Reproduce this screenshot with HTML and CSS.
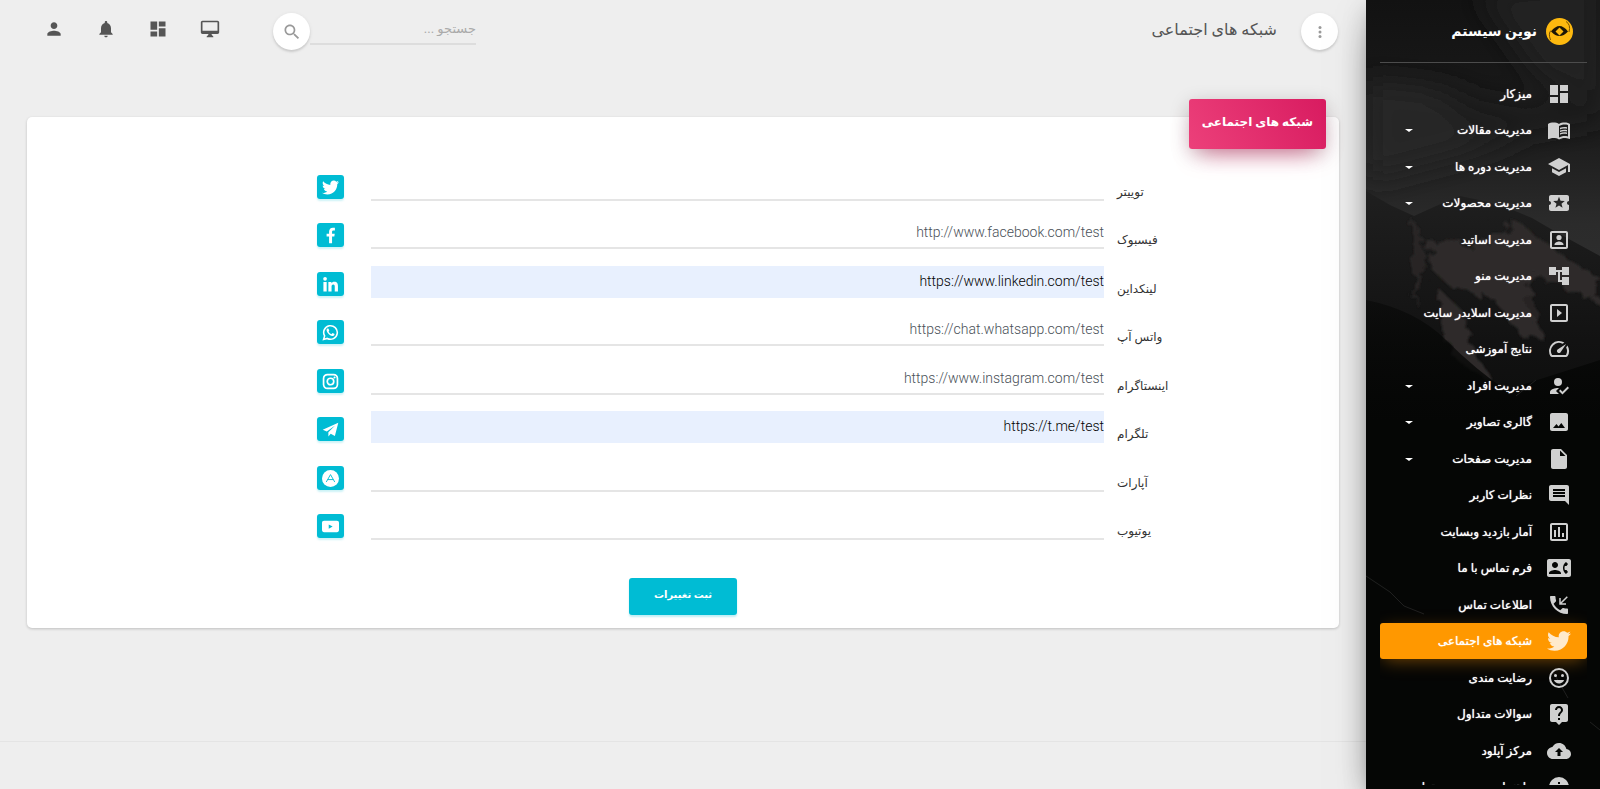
FILE: index.html
```html
<!DOCTYPE html>
<html lang="fa" dir="rtl">
<head>
<meta charset="utf-8">
<meta name="viewport" content="width=device-width, initial-scale=1">
<title>شبکه های اجتماعی</title>
<link rel="stylesheet" href="styles.css">
</head>
<body>
<svg class="sprite" aria-hidden="true">
  <symbol id="dashboard" viewBox="0 0 24 24"><path d="M3 13h8V3H3v10zm0 8h8v-6H3v6zm10 0h8V11h-8v10zm0-18v6h8V3h-8z"/></symbol>
  <symbol id="book" viewBox="0 0 24 24"><path d="M21 5c-1.11-.35-2.33-.5-3.5-.5-1.95 0-4.05.4-5.5 1.5-1.45-1.1-3.55-1.5-5.5-1.5S2.45 4.9 1 6v14.65c0 .25.25.5.5.5.1 0 .15-.05.25-.05C3.1 20.45 5.05 20 6.5 20c1.95 0 4.05.4 5.5 1.5 1.35-.85 3.8-1.5 5.5-1.5 1.65 0 3.35.3 4.75 1.05.1.05.15.05.25.05.25 0 .5-.25.5-.5V6c-.6-.45-1.25-.75-2-1zm0 13.5c-1.1-.35-2.3-.5-3.5-.5-1.7 0-4.15.65-5.5 1.5V8c1.35-.85 3.8-1.5 5.5-1.5 1.2 0 2.4.15 3.5.5v11.5z"/><path d="M17.5 10.5c.88 0 1.73.09 2.5.26V9.24c-.79-.15-1.64-.24-2.5-.24-1.7 0-3.24.29-4.5.83v1.66c1.13-.64 2.7-.99 4.5-.99zM13 12.49v1.66c1.13-.64 2.7-.99 4.5-.99.88 0 1.73.09 2.5.26V11.9c-.79-.15-1.64-.24-2.5-.24-1.7 0-3.24.3-4.5.83zM17.5 14.33c-1.7 0-3.24.29-4.5.83v1.66c1.13-.64 2.7-.99 4.5-.99.88 0 1.73.09 2.5.26v-1.52c-.79-.16-1.64-.24-2.5-.24z"/></symbol>
  <symbol id="school" viewBox="0 0 24 24"><path d="M5 13.18v4L12 21l7-3.82v-4L12 17l-7-3.82zM12 3L1 9l11 6 9-4.91V17h2V9L12 3z"/></symbol>
  <symbol id="ticket" viewBox="0 0 24 24"><path d="M20 12c0-1.1.9-2 2-2V6c0-1.1-.9-2-2-2H4c-1.1 0-1.99.9-1.99 2v4c1.1 0 1.99.9 1.99 2s-.89 2-2 2v4c0 1.1.9 2 2 2h16c1.1 0 2-.9 2-2v-4c-1.1 0-2-.9-2-2zm-4.42 4.8L12 14.5l-3.58 2.3 1.08-4.12-3.29-2.69 4.24-.25L12 5.8l1.54 3.95 4.24.25-3.29 2.69 1.09 4.11z"/></symbol>
  <symbol id="portrait" viewBox="0 0 24 24"><path fill-rule="evenodd" d="M19 3H5c-1.11 0-2 .9-2 2v14c0 1.1.89 2 2 2h14c1.1 0 2-.9 2-2V5c0-1.1-.9-2-2-2zm0 16H5V5h14v14z"/><circle cx="12" cy="9.5" r="2.6"/><path d="M7.5 16.5c0-1.9 3-2.9 4.5-2.9s4.5 1 4.5 2.9v.5h-9z"/></symbol>
  <symbol id="tree" viewBox="0 0 24 24"><path d="M22 11V3h-7v3H9V3H2v8h7V8h2v10h4v3h7v-8h-7v3h-2V8h2v3z"/></symbol>
  <symbol id="slideshow" viewBox="0 0 24 24"><path d="M10 8v8l5-4-5-4zm9-5H5c-1.1 0-2 .9-2 2v14c0 1.1.9 2 2 2h14c1.1 0 2-.9 2-2V5c0-1.1-.9-2-2-2zm0 16H5V5h14v14z"/></symbol>
  <symbol id="speed" viewBox="0 0 24 24"><path d="M20.38 8.57l-1.23 1.85a8 8 0 0 1-.22 7.58H5.07A8 8 0 0 1 15.58 6.85l1.85-1.23A10 10 0 0 0 3.35 19a2 2 0 0 0 1.72 1h13.85a2 2 0 0 0 1.74-1 10 10 0 0 0-.27-10.44zm-9.79 6.84a2 2 0 0 0 2.83 0l5.66-8.49-8.49 5.66a2 2 0 0 0 0 2.83z"/></symbol>
  <symbol id="reg" viewBox="0 0 24 24"><circle cx="11" cy="8" r="4"/><path d="M9 17l3-2.94c-.39-.04-.68-.06-1-.06-2.67 0-8 1.34-8 4v2h9l-3-3zM15.47 20.5L12 17l1.4-1.41 2.07 2.08 5.13-5.17 1.4 1.41z"/></symbol>
  <symbol id="image" viewBox="0 0 24 24"><path d="M21 19V5c0-1.1-.9-2-2-2H5c-1.1 0-2 .9-2 2v14c0 1.1.9 2 2 2h14c1.1 0 2-.9 2-2zM9.5 14l2 2.4L14.3 13l3.7 5H6z"/></symbol>
  <symbol id="file" viewBox="0 0 24 24"><path d="M6 2c-1.1 0-1.99.9-1.99 2L4 20c0 1.1.89 2 1.99 2H18c1.1 0 2-.9 2-2V8l-6-6H6zm7 7V3.5L18.5 9H13z"/></symbol>
  <symbol id="comment" viewBox="0 0 24 24"><path d="M21.99 4c0-1.1-.89-2-1.99-2H4c-1.1 0-2 .9-2 2v12c0 1.1.9 2 2 2h14l4 4-.01-18zM18 14H6v-2h12v2zm0-3H6V9h12v2zm0-3H6V6h12v2z"/></symbol>
  <symbol id="chart" viewBox="0 0 24 24"><path d="M9 17H7v-7h2v7zm4 0h-2V7h2v10zm4 0h-2v-4h2v4zm2 2H5V5h14v14zm0-16H5c-1.1 0-2 .9-2 2v14c0 1.1.9 2 2 2h14c1.1 0 2-.9 2-2V5c0-1.1-.9-2-2-2z"/></symbol>
  <symbol id="contact" viewBox="0 0 24 24"><path d="M22 3H2C.9 3 0 3.9 0 5v14c0 1.1.9 2 2 2h20c1.1 0 1.99-.9 1.99-2L24 5c0-1.1-.9-2-2-2zM8 6c1.66 0 3 1.34 3 3s-1.34 3-3 3-3-1.34-3-3 1.34-3 3-3zm6 12H2v-1c0-2 4-3.1 6-3.1s6 1.1 6 3.1v1zm3.85-4h1.64L21 16l-1.99 1.99c-1.31-.98-2.28-2.38-2.73-3.99-.18-.64-.28-1.31-.28-2s.1-1.36.28-2c.45-1.62 1.42-3.01 2.73-3.99L21 8l-1.51 2h-1.64c-.22.63-.35 1.3-.35 2s.13 1.37.35 2z"/></symbol>
  <symbol id="phone" viewBox="0 0 24 24"><path d="M20 15.5c-1.25 0-2.45-.2-3.57-.57-.35-.11-.74-.03-1.02.24l-2.2 2.2c-2.83-1.44-5.15-3.75-6.59-6.58l2.2-2.21c.28-.27.36-.66.25-1.01C8.7 6.45 8.5 5.25 8.5 4c0-.55-.45-1-1-1H4c-.55 0-1 .45-1 1 0 9.39 7.61 17 17 17 .55 0 1-.45 1-1v-3.5c0-.55-.45-1-1-1z"/><path d="M20.3 3.7L13.500 10.500M13 5v6h6" fill="none" stroke="currentColor" stroke-width="1.5"/></symbol>
  <symbol id="twitter" viewBox="0 0 512 512"><path d="M459.37 151.716c.325 4.548.325 9.097.325 13.645 0 138.72-105.583 298.558-298.558 298.558-59.452 0-114.68-17.219-161.137-47.106 8.447.974 16.568 1.299 25.34 1.299 49.055 0 94.213-16.568 130.274-44.832-46.132-.975-84.792-31.188-98.112-72.772 6.498.974 12.995 1.624 19.818 1.624 9.421 0 18.843-1.3 27.614-3.573-48.081-9.747-84.143-51.98-84.143-102.985v-1.299c13.969 7.797 30.214 12.67 47.431 13.319-28.264-18.843-46.781-51.005-46.781-87.391 0-19.492 5.197-37.36 14.294-52.954 51.655 63.675 129.3 105.258 216.365 109.807-1.624-7.797-2.599-15.918-2.599-24.04 0-57.828 46.782-104.934 104.934-104.934 30.213 0 57.502 12.67 76.67 33.137 23.715-4.548 46.456-13.32 66.599-25.34-7.798 24.366-24.366 44.833-46.132 57.827 21.117-2.273 41.584-8.122 60.426-16.243-14.292 20.791-32.161 39.308-52.628 54.253z"/></symbol>
  <symbol id="smile" viewBox="0 0 24 24"><circle cx="12" cy="12" r="9" fill="none" stroke="currentColor" stroke-width="2"/><circle cx="8.5" cy="9.5" r="1.5"/><circle cx="15.5" cy="9.5" r="1.5"/><path d="M12 17.5c2.33 0 4.31-1.46 5.11-3.5H6.89c.8 2.04 2.78 3.5 5.11 3.5z"/></symbol>
  <symbol id="help" viewBox="0 0 24 24"><path d="M19 2H5c-1.11 0-2 .9-2 2v14c0 1.1.89 2 2 2h4l3 3 3-3h4c1.1 0 2-.9 2-2V4c0-1.1-.9-2-2-2zm-6 16h-2v-2h2v2zm2.07-7.75l-.9.92C13.45 11.9 13 12.5 13 14h-2v-.5c0-1.1.45-2.1 1.17-2.83l1.24-1.26c.37-.36.59-.86.59-1.41 0-1.1-.9-2-2-2s-2 .9-2 2H8c0-2.21 1.79-4 4-4s4 1.79 4 4c0 .88-.36 1.68-.93 2.25z"/></symbol>
  <symbol id="cloud" viewBox="0 0 24 24"><path d="M19.35 10.04C18.67 6.59 15.64 4 12 4 9.11 4 6.6 5.64 5.35 8.04 2.34 8.36 0 10.91 0 14c0 3.31 2.69 6 6 6h13c2.76 0 5-2.24 5-5 0-2.64-2.05-4.78-4.65-4.96zM13.5 13v4h-3v-4H8l4-4 4 4z"/></symbol>
  <symbol id="info" viewBox="0 0 24 24"><path d="M12 2a10 10 0 1 0 0 20 10 10 0 0 0 0-20zm1 15h-2v-6h2zm0-8h-2V7h2z"/></symbol>
  <symbol id="person" viewBox="0 0 24 24"><path d="M12 12c2.21 0 4-1.79 4-4s-1.79-4-4-4-4 1.79-4 4 1.79 4 4 4zm0 2c-2.67 0-8 1.34-8 4v2h16v-2c0-2.66-5.33-4-8-4z"/></symbol>
  <symbol id="bell" viewBox="0 0 24 24"><path d="M12 22c1.1 0 2-.9 2-2h-4c0 1.1.89 2 2 2zm6-6v-5c0-3.07-1.64-5.64-4.5-6.32V4c0-.83-.67-1.5-1.5-1.5s-1.5.67-1.5 1.5v.68C7.63 5.36 6 7.92 6 11v5l-2 2v1h16v-1l-2-2z"/></symbol>
  <symbol id="desktop" viewBox="0 0 24 24"><path d="M21 2H3c-1.1 0-2 .9-2 2v12c0 1.1.9 2 2 2h7v1l-2 2v1h8v-1l-2-2v-1h7c1.1 0 2-.9 2-2V4c0-1.1-.9-2-2-2zm0 12H3V4h18v10z"/></symbol>
  <symbol id="search" viewBox="0 0 24 24"><path d="M15.5 14h-.79l-.28-.27C15.41 12.59 16 11.11 16 9.5 16 5.91 13.09 3 9.5 3S3 5.91 3 9.5 5.91 16 9.5 16c1.61 0 3.09-.59 4.23-1.57l.27.28v.79l5 4.99L20.49 19l-4.99-5zm-6 0C7.01 14 5 11.99 5 9.5S7.01 5 9.5 5 14 7.01 14 9.5 11.99 14 9.5 14z"/></symbol>
  <symbol id="more" viewBox="0 0 24 24"><circle cx="12" cy="6" r="2"/><circle cx="12" cy="12" r="2"/><circle cx="12" cy="18" r="2"/></symbol>
  <symbol id="facebook" viewBox="0 0 24 24"><path d="M10 23V13.5H6.5V9.5H10V6.8C10 3.3 12 1 15.5 1c1.2 0 2.3.1 2.7.2v3.7h-2c-1.5 0-2 .9-2 2v2.6H18l-.6 4h-3.200V23z"/></symbol>
  <symbol id="linkedin" viewBox="0 0 24 24"><circle cx="4.3" cy="4" r="2.6"/><path d="M2 8.5h4.6V22H2zM9 8.500h4.300v1.900c.7-1.200 2-2.200 4-2.200 4.200 0 5.200 2.700 5.200 6.300V22H18v-6.800c0-1.700-.2-3.300-2.100-3.300-2 0-2.400 1.500-2.400 3.200V22H9z"/></symbol>
  <symbol id="whatsapp" viewBox="0 0 24 24"><path d="M2.2 21.800l1.500-5A9.600 9.600 0 1 1 7.400 20.400z" fill="none" stroke="currentColor" stroke-width="2.2"/><path d="M8.800 6.500c-.4-.4-1.200-.2-1.600.3-1.300 1.400-.8 3.500.7 5.600 1.900 2.700 4.600 4.700 7.300 4.500 1.500-.2 2.600-1.300 2.500-2.500 0-.4-2.700-1.700-3.100-1.500-.5.2-1 1.500-1.500 1.400-1.400-.4-3-1.900-3.700-3.400-.2-.4.8-1.100.8-1.500 0-.5-1-2.600-1.400-2.900z"/></symbol>
  <symbol id="instagram" viewBox="0 0 24 24"><rect x="2.2" y="2.2" width="19.6" height="19.6" rx="5.5" fill="none" stroke="currentColor" stroke-width="2.4"/><circle cx="12" cy="12" r="4.6" fill="none" stroke="currentColor" stroke-width="2.4"/><circle cx="17.7" cy="6.3" r="1.5"/></symbol>
  <symbol id="telegram" viewBox="0 0 24 24"><path d="M23 2.5L1 12.2l5.8 2.5L18.5 6.2 9 15.9v6l3.300-4 5.900 3.300z"/></symbol>
  <symbol id="aparat" viewBox="0 0 24 24"><circle cx="12" cy="12" r="12"/><path d="M6 17L12 6.500 18 17M8 13.500h8" fill="none" stroke="#00bcd4" stroke-width="1.3"/></symbol>
  <symbol id="youtube" viewBox="0 0 24 24"><path fill-rule="evenodd" d="M3 4h18c2 0 3 1.2 3 3v10c0 1.8-1 3-3 3H3c-2 0-3-1.2-3-3V7c0-1.8 1-3 3-3zm6.500 5v6l5.500-3z"/></symbol>
</svg>

<aside class="sidebar">
  <svg class="sidebar-art" viewBox="0 0 234 789" preserveAspectRatio="xMidYMid slice" aria-hidden="true">
    <defs>
      <linearGradient id="sky" x1="0" y1="0" x2="0" y2="1"><stop offset="0" stop-color="#121212"/><stop offset=".4" stop-color="#1b1b1b"/><stop offset=".7" stop-color="#2b2b2b"/><stop offset="1" stop-color="#303030"/></linearGradient>
      <linearGradient id="rock" x1="0" y1="0" x2="0" y2="1"><stop offset="0" stop-color="#1f1f1f"/><stop offset=".25" stop-color="#121212"/><stop offset=".5" stop-color="#080908"/><stop offset="1" stop-color="#030404"/></linearGradient>
      <linearGradient id="shade" x1="0" y1="0" x2="0" y2="1"><stop offset="0" stop-color="#050605" stop-opacity=".5"/><stop offset=".25" stop-color="#050605"/></linearGradient>
      <filter id="soft" x="-50%" y="-50%" width="200%" height="200%"><feGaussianBlur stdDeviation="14"/></filter>
      <filter id="edge"><feTurbulence type="fractalNoise" baseFrequency=".08" numOctaves="5" seed="7" result="n"/><feDisplacementMap in="SourceGraphic" in2="n" scale="26"/><feGaussianBlur stdDeviation="1"/></filter>
    </defs>
    <rect width="234" height="320" fill="url(#sky)"/>
    <g filter="url(#soft)"><path d="M110-10l124-10v120l-60-20z" fill="#202020"/><path d="M0 80l90 10 60 50-150 40z" fill="#272727"/><path d="M60 90l100 20 74-20v30l-120 20z" fill="#1e1e1e"/></g>
    <path d="M0 191l24 14 24 11 22-10 24-10 24 5 24 7 24 10 24 14 44 24v533H0z" fill="url(#rock)"/>
    <g fill="#2d2b29" filter="url(#edge)"><path d="M62 240l50 6 34-28 54 40 34 20v26l-60-28-18 22 26 46-30-10-22-34-42-10-24-22z"/><path d="M70 286l26 24 14 46 22 30-42-26-14-36z"/><path d="M46 216l12 26-4 70-8-40zM150 270l20 40-14 24z" opacity=".7"/></g>
    <path d="M0 300q50 10 80 40t60 50l94-30v429H0z" fill="url(#shade)"/>
    <g fill="none" stroke="#202020"><path d="M0 576l24 16 14 14 20 8M186 670l16 28M224 722l10 8M150 396l20-16"/></g>
  </svg>
  <div class="sidebar-inner">
    <a class="brand" href="#">
      <svg class="brand-logo" viewBox="0 0 27 27" aria-hidden="true"><circle cx="13.5" cy="13.5" r="13.5" fill="#fdb90f"/><path d="M5 13.500q8.500-11 17 0-8.500 9-17 0z" fill="#1c1606"/><path d="M13.500 9.500l4 4-4 4-4-4z" fill="#fdb90f"/><path d="M4.500 22Q2 15 5 12.500M20 3.500q5 3 3 10.500" fill="none" stroke="#7a5200"/></svg>
      <span>نوین سیستم</span>
    </a>
    <nav class="nav">
      <ul class="nav-list">
        <li><a class="nav-link" href="#"><svg class="icon"><use href="#dashboard"/></svg><span>میزکار</span></a></li>
        <li><a class="nav-link has-menu" href="#"><svg class="icon"><use href="#book"/></svg><span>مدیریت مقالات</span></a></li>
        <li><a class="nav-link has-menu" href="#"><svg class="icon"><use href="#school"/></svg><span>مدیریت دوره ها</span></a></li>
        <li><a class="nav-link has-menu" href="#"><svg class="icon"><use href="#ticket"/></svg><span>مدیریت محصولات</span></a></li>
        <li><a class="nav-link" href="#"><svg class="icon"><use href="#portrait"/></svg><span>مدیریت اساتید</span></a></li>
        <li><a class="nav-link" href="#"><svg class="icon"><use href="#tree"/></svg><span>مدیریت منو</span></a></li>
        <li><a class="nav-link" href="#"><svg class="icon"><use href="#slideshow"/></svg><span>مدیریت اسلایدر سایت</span></a></li>
        <li><a class="nav-link" href="#"><svg class="icon"><use href="#speed"/></svg><span>نتایج آموزشی</span></a></li>
        <li><a class="nav-link has-menu" href="#"><svg class="icon"><use href="#reg"/></svg><span>مدیریت افراد</span></a></li>
        <li><a class="nav-link has-menu" href="#"><svg class="icon"><use href="#image"/></svg><span>گالری تصاویر</span></a></li>
        <li><a class="nav-link has-menu" href="#"><svg class="icon"><use href="#file"/></svg><span>مدیریت صفحات</span></a></li>
        <li><a class="nav-link" href="#"><svg class="icon"><use href="#comment"/></svg><span>نظرات کاربر</span></a></li>
        <li><a class="nav-link" href="#"><svg class="icon"><use href="#chart"/></svg><span>آمار بازدید وبسایت</span></a></li>
        <li><a class="nav-link" href="#"><svg class="icon"><use href="#contact"/></svg><span>فرم تماس با ما</span></a></li>
        <li><a class="nav-link" href="#"><svg class="icon"><use href="#phone"/></svg><span>اطلاعات تماس</span></a></li>
        <li><a class="nav-link active" href="#" aria-current="page"><svg class="icon"><use href="#twitter"/></svg><span>شبکه های اجتماعی</span></a></li>
        <li><a class="nav-link" href="#"><svg class="icon"><use href="#smile"/></svg><span>رضایت مندی</span></a></li>
        <li><a class="nav-link" href="#"><svg class="icon"><use href="#help"/></svg><span>سوالات متداول</span></a></li>
        <li><a class="nav-link" href="#"><svg class="icon"><use href="#cloud"/></svg><span>مرکز آپلود</span></a></li>
        <li><a class="nav-link" href="#"><svg class="icon"><use href="#info"/></svg><span>راهنمای مدیریت محتوا</span></a></li>
      </ul>
    </nav>
  </div>
</aside>

<div class="main">
  <header class="topbar">
    <button class="round" type="button" aria-label="منو"><svg class="icon icon-sm"><use href="#more"/></svg></button>
    <h1 class="page-title">شبکه های اجتماعی</h1>
    <form class="search" role="search">
      <input class="search-input" type="search" placeholder="جستجو ..." aria-label="جستجو">
      <button class="round" type="submit" aria-label="جستجو"><svg class="icon icon-md"><use href="#search"/></svg></button>
    </form>
    <nav class="tools">
      <a href="#" aria-label="نمایش سایت"><svg class="icon icon-md"><use href="#desktop"/></svg></a>
      <a href="#" aria-label="داشبورد"><svg class="icon icon-md"><use href="#dashboard"/></svg></a>
      <a href="#" aria-label="اعلان ها"><svg class="icon icon-md"><use href="#bell"/></svg></a>
      <a href="#" aria-label="حساب کاربری"><svg class="icon icon-md"><use href="#person"/></svg></a>
    </nav>
  </header>

  <main class="content">
    <form class="card">
      <h2 class="card-tab">شبکه های اجتماعی</h2>
      <div class="fields">
        <div class="field"><label for="f1">توییتر</label><input id="f1" type="text"><span class="badge"><svg class="icon"><use href="#twitter"/></svg></span></div>
        <div class="field"><label for="f2">فیسبوک</label><input id="f2" type="text" value="http://www.facebook.com/test"><span class="badge"><svg class="icon"><use href="#facebook"/></svg></span></div>
        <div class="field"><label for="f3">لینکداین</label><input id="f3" class="filled" type="text" value="https://www.linkedin.com/test"><span class="badge"><svg class="icon"><use href="#linkedin"/></svg></span></div>
        <div class="field"><label for="f4">واتس آپ</label><input id="f4" type="text" value="https://chat.whatsapp.com/test"><span class="badge"><svg class="icon"><use href="#whatsapp"/></svg></span></div>
        <div class="field"><label for="f5">اینستاگرام</label><input id="f5" type="text" value="https://www.instagram.com/test"><span class="badge"><svg class="icon"><use href="#instagram"/></svg></span></div>
        <div class="field"><label for="f6">تلگرام</label><input id="f6" class="filled" type="text" value="https://t.me/test"><span class="badge"><svg class="icon"><use href="#telegram"/></svg></span></div>
        <div class="field"><label for="f7">آپارات</label><input id="f7" type="text"><span class="badge"><svg class="icon"><use href="#aparat"/></svg></span></div>
        <div class="field"><label for="f8">یوتیوب</label><input id="f8" type="text"><span class="badge"><svg class="icon"><use href="#youtube"/></svg></span></div>
      </div>
      <button class="save" type="submit">ثبت تغییرات</button>
    </form>
  </main>
  <footer class="footer"></footer>
</div>
</body>
</html>
```

FILE: styles.css
```css
* { box-sizing: border-box; }

body {
  margin: 0;
  display: flex;
  height: 100vh;
  overflow: hidden;
  background: #eee;
  color: #3c4858;
  font-family: Roboto, "DejaVu Sans", sans-serif;
  font-size: 13px;
}

a { color: inherit; text-decoration: none; }

button, input { font-family: inherit; }

.sprite { position: absolute; width: 0; height: 0; }

.icon { width: 24px; height: 24px; fill: currentColor; flex: none; }
.icon-md { width: 20px; height: 20px; }
.icon-sm { width: 18px; height: 18px; }

/* Sidebar */
.sidebar {
  position: relative;
  z-index: 1;
  flex: none;
  width: 234px;
  background: #040505;
  color: #fff;
  box-shadow: 0 16px 38px -12px rgba(0, 0, 0, .56), 0 4px 25px 0 rgba(0, 0, 0, .12), 0 8px 10px -5px rgba(0, 0, 0, .2);
}

.sidebar-art { position: absolute; inset: 0; width: 100%; height: 100%; }

.sidebar-inner {
  position: relative;
  display: flex;
  flex-direction: column;
  height: 100%;
  padding: 0 13px 4px 14px;
}

.brand {
  display: flex;
  align-items: center;
  gap: 9px;
  height: 63px;
  flex: none;
  padding-right: 14px;
  border-bottom: 1px solid #4c4c4c;
  font-size: 14px;
  font-weight: 700;
}

.brand-logo { width: 27px; height: 27px; }

.nav { flex: 1; min-height: 0; overflow: hidden; padding-top: 13px; }

.nav-list { margin: 0; padding: 0; list-style: none; }
.nav-list li:nth-child(even) { margin-bottom: 1px; }

.nav-link {
  display: flex;
  align-items: center;
  gap: 15px;
  height: 36px;
  padding: 0 16px 0 25px;
  border-radius: 3px;
  font-size: 12px;
  text-shadow: 0 0 1px #fff;
  white-space: nowrap;
}

.nav-link .icon { color: #d0d0d0; }

.has-menu::after {
  content: "";
  margin-right: auto;
  border: solid transparent;
  border-width: 3px 4px 0;
  border-top-color: #fff;
}

.active { background: #ff9800; box-shadow: 0 4px 18px -4px rgba(255, 152, 0, .5); }
.nav-link.active .icon { color: #ffeacc; }

/* Main column */
.main { flex: 1; min-width: 0; display: flex; flex-direction: column; }

.topbar {
  display: flex;
  align-items: flex-start;
  padding: 13px 28px 0;
  color: #555;
}

.round {
  display: grid;
  place-items: center;
  width: 37px;
  height: 37px;
  padding: 0;
  border: 0;
  border-radius: 50%;
  background: #fff;
  color: #999;
  box-shadow: 0 2px 2px 0 rgba(0, 0, 0, .1), 0 1px 4px 0 rgba(0, 0, 0, .08);
}

.page-title { margin: 0 24px 0 0; font-size: 16px; font-weight: 400; line-height: 34px; }

.search { display: flex; margin-right: auto; }

.search-input {
  width: 166px;
  height: 32px;
  padding: 0;
  border: 0;
  border-bottom: 2px solid #ddd;
  background: none;
  font-size: 13px;
  outline: 0;
}
.search-input::placeholder { color: #aaa; }

.tools { display: flex; margin-right: 37px; }
.tools a { display: grid; place-items: center; width: 52px; height: 32px; }

.content { flex: 1; padding: 67px 27px 0; }

.card {
  display: flex;
  flex-direction: column;
  padding-bottom: 13px;
  border-radius: 5px;
  background: #fff;
  box-shadow: 0 1px 3px 0 rgba(0, 0, 0, .2);
}

.card-tab {
  align-self: flex-start;
  margin: -18px 13px 0;
  padding: 0 13px 4px;
  border-radius: 3px;
  background: linear-gradient(60deg, #ec407a, #d81b60);
  box-shadow: 0 5px 20px 0 rgba(0, 0, 0, .2), 0 13px 24px -11px rgba(233, 30, 99, .6);
  color: #fff;
  font-size: 12px;
  font-weight: 700;
  line-height: 46px;
}

.fields { padding-top: 20px; }

.field {
  display: grid;
  grid-template-columns: 222fr 733fr 331fr;
  column-gap: 13px;
  height: 32px;
  margin-bottom: 16px;
}
.field:nth-child(even) { margin-bottom: 17px; }

.field label {
  justify-self: end;
  padding-top: 14px;
  color: #333;
  font-size: 12px;
  line-height: 18px;
}

.field input {
  min-width: 0;
  height: 32px;
  padding: 0;
  border: 0;
  border-bottom: 2px solid #e5e5e5;
  background: none;
  color: #495057;
  font-size: 14px;
  font-weight: 300;
  outline: 0;
}
.field input.filled { border-color: #e8f0fe; background: #e8f0fe; color: #000; }

.badge {
  display: grid;
  place-items: center;
  width: 27px;
  height: 24px;
  margin: 6px 14px 0;
  border-radius: 3px;
  background: #00bcd4;
  box-shadow: 0 2px 2px 0 rgba(0, 188, 212, .2);
  color: #fff;
}
.badge .icon { width: 17px; height: 17px; }

.save {
  align-self: center;
  width: 108px;
  height: 37px;
  margin-top: 21px;
  padding: 0 0 4px;
  border: 0;
  border-radius: 3px;
  background: #00bcd4;
  box-shadow: 0 2px 2px 0 rgba(0, 188, 212, .25);
  color: #fff;
  font-size: 10px;
  font-weight: 700;
}

.footer { height: 48px; border-top: 1px solid #e4e4e4; }
```
